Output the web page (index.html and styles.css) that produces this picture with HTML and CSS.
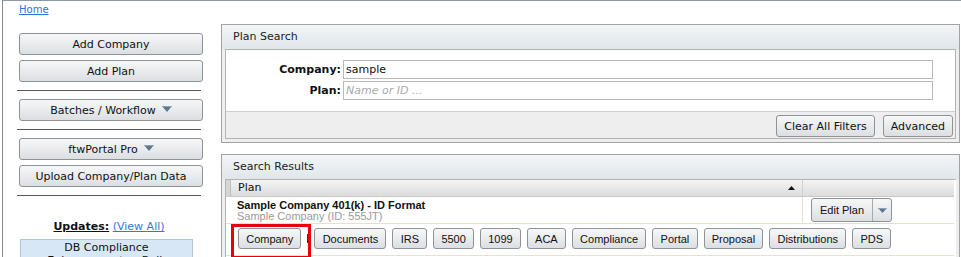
FILE: index.html
```html
<!DOCTYPE html>
<html>
<head>
<meta charset="utf-8">
<link rel="stylesheet" href="styles.css">
</head>
<body>
<div class="frame">
  <div class="crumb"><a href="#">Home</a></div>
  <div class="main">
    <aside class="side">
      <button class="sbtn">Add Company</button>
      <button class="sbtn">Add Plan</button>
      <hr class="div">
      <button class="sbtn">Batches / Workflow <svg class="tri" width="10" height="6" viewBox="0 0 10 6"><path d="M0 0H10L5 6Z" fill="#5d7690"/><path d="M0.5 0.5H9.5" stroke="#8da3b8" stroke-width="1"/></svg></button>
      <hr class="div">
      <button class="sbtn">ftwPortal Pro <svg class="tri" width="10" height="6" viewBox="0 0 10 6"><path d="M0 0H10L5 6Z" fill="#5d7690"/><path d="M0.5 0.5H9.5" stroke="#8da3b8" stroke-width="1"/></svg></button>
      <button class="sbtn">Upload Company/Plan Data</button>
      <hr class="div">
      <div class="updates"><span class="uph">Updates:</span> <a href="#">(View All)</a></div>
      <div class="upbox">DB Compliance<br>Enhancements – Bulk</div>
    </aside>
    <section class="content">
      <div class="panel">
        <div class="phead">Plan Search</div>
        <div class="pbody">
          <div class="form">
            <label class="lbl">Company:</label><input class="inp" type="text" value="sample">
            <label class="lbl">Plan:</label><input class="inp" type="text" placeholder="Name or ID ...">
          </div>
          <div class="foot">
            <button class="fbtn">Clear All Filters</button>
            <button class="fbtn">Advanced</button>
          </div>
        </div>
      </div>
      <div class="panel results">
        <div class="phead">Search Results</div>
        <div class="pbody grid">
          <div class="ghead">
            <div class="gcol1">Plan <svg class="sort" width="7" height="4" viewBox="0 0 7 4"><path d="M0 4L3.5 0L7 4Z" fill="#111"/></svg></div>
            <div class="gcol2"></div>
          </div>
          <div class="grow">
            <div class="gcol1 pl">
              <div class="ptitle">Sample Company 401(k) - ID Format</div>
              <div class="psub">Sample Company (ID: 555JT)</div>
            </div>
            <div class="gcol2 act">
              <div class="split"><span class="sl">Edit Plan</span><span class="sr"><svg width="9" height="5" viewBox="0 0 9 5"><path d="M0 0H9L4.5 5Z" fill="#5d7690"/><path d="M0.5 0.5H8.5" stroke="#8da3b8" stroke-width="1"/></svg></span></div>
            </div>
          </div>
          <div class="brow">
            <span class="hl"><button class="rbtn">Company</button><span class="caret"></span></span>
            <button class="rbtn">Documents</button>
            <button class="rbtn">IRS</button>
            <button class="rbtn">5500</button>
            <button class="rbtn">1099</button>
            <button class="rbtn">ACA</button>
            <button class="rbtn">Compliance</button>
            <button class="rbtn">Portal</button>
            <button class="rbtn">Proposal</button>
            <button class="rbtn">Distributions</button>
            <button class="rbtn">PDS</button>
          </div>
        </div>
      </div>
    </section>
  </div>
</div>
</body>
</html>
```

FILE: styles.css
```css
html, body {
  margin: 0;
  padding: 0;
  background: #fff;
  overflow: hidden;
  height: 257px;
}
.frame {
  margin-left: 2px;
  border-left: 1px solid #8a8a8a;
  border-top: 1px solid #8d99a5;
  height: 256px;
  overflow: hidden;
  font-family: "DejaVu Sans", Verdana, sans-serif;
  color: #111;
}
.crumb {
  height: 23px;
  padding-left: 16px;
  font-size: 10px;
  line-height: 12px;
  padding-top: 3px;
  box-sizing: border-box;
}
.crumb a { color: #2f6fde; }
.main {
  display: flex;
  align-items: flex-start;
}
.side {
  width: 218px;
  flex: none;
  box-sizing: border-box;
  padding: 9px 0 0 14px;
  display: flex;
  flex-direction: column;
  align-items: flex-start;
}
.sbtn {
  margin: 0 0 5px 2px;
  width: 184px;
  height: 22px;
  border: 1px solid #8e9398;
  border-radius: 3px;
  background: linear-gradient(#f6f7f8, #e9ebed 50%, #dcdfe2);
  font-family: "DejaVu Sans", Verdana, sans-serif;
  font-size: 11px;
  color: #111;
  padding: 0;
  display: flex;
  align-items: center;
  justify-content: center;
  gap: 6px;
}
.sbtn .tri { margin-top: -2px; }
.div {
  width: 184px;
  margin: 3px 0 8px 0;
  border: 0;
  border-top: 1px solid #5a5a5a;
  height: 0;
}
.updates {
  width: 184px;
  text-align: center;
  margin-top: 16px;
  font-size: 11px;
  line-height: 13px;
}
.uph { font-weight: bold; text-decoration: underline; }
.updates a { color: #3b74d6; }
.upbox {
  margin: 6px 0 0 3px;
  width: 173px;
  box-sizing: border-box;
  background: #d8e7f5;
  border: 1px solid #b3c5d6;
  text-align: center;
  font-size: 11px;
  line-height: 13px;
  padding-top: 1px;
  height: 40px;
}
.content {
  flex: 1;
  min-width: 0;
  margin-right: 1px;
}
.panel {
  border: 1px solid #a2a2a2;
  background: linear-gradient(#f2f5f6, #dfe7eb 24px, #eeeeee 24px);
}
.phead {
  height: 24px;
  line-height: 24px;
  padding-left: 11px;
  font-size: 11px;
  color: #222;
}
.pbody {
  margin: 0 3px 3px 3px;
  border: 1px solid #b4b4b4;
  background: #fff;
}
.form {
  display: grid;
  grid-template-columns: 115px 1fr;
  column-gap: 2px;
  row-gap: 2px;
  padding: 10px 22px 11px 0;
  align-items: center;
}
.lbl {
  text-align: right;
  font-weight: bold;
  font-size: 11px;
  color: #111;
}
.inp {
  height: 19px;
  box-sizing: border-box;
  border: 1px solid #b9b9b9;
  padding: 0 2px;
  font-family: "DejaVu Sans", Verdana, sans-serif;
  font-size: 11px;
  color: #111;
  outline: none;
}
.inp::placeholder { color: #aaa; font-style: italic; }
.foot {
  background: #eeeeee;
  border-top: 1px solid #cfcfcf;
  display: flex;
  justify-content: flex-end;
  gap: 8px;
  padding: 3px 2px 1px 0;
}
.fbtn {
  height: 22px;
  border: 1px solid #8e9398;
  border-radius: 3px;
  background: linear-gradient(#f6f7f8, #e9ebed 50%, #dcdfe2);
  font-family: "DejaVu Sans", Verdana, sans-serif;
  font-size: 11px;
  color: #111;
  padding: 0 7px;
}
.results { margin-top: 11px; }
.grid { border-right: 0; height: 80px; }
.ghead {
  display: flex;
  height: 16px;
  border-left: 4px solid #d6d6d6;
  border-bottom: 1px solid #c8c8c8;
  background: linear-gradient(#f4f4f4, #dcdcdc);
  margin-right: 2px;
  font-size: 11px;
  line-height: 16px;
}
.gcol1 {
  width: 573px;
  flex: none;
  box-sizing: border-box;
  border-right: 1px solid #cfcfcf;
  position: relative;
  padding-left: 7px;
}
.ghead .gcol1 { border-left: 1px solid #bdbdbd; }
.gcol2 { flex: 1; }
.sort { position: absolute; right: 7px; top: 6px; }
.grow {
  display: flex;
  border-bottom: 1px solid #e9dfcf;
  margin-right: 2px;
  height: 26px;
}
.grow .gcol1 { border-right: 1px solid #eadfce; width: 577px; padding-left: 11px; }
.pl { font-family: "Liberation Sans", Arial, sans-serif; font-size: 11px; padding-top: 2px; }
.ptitle { font-weight: bold; line-height: 12px; color: #111; }
.psub { color: #9a9a9a; line-height: 11px; }
.act { padding: 1px 0 0 8px; }
.split {
  display: inline-flex;
  height: 24px;
  box-sizing: border-box;
  border: 1px solid #8e9398;
  border-radius: 3px;
  background: linear-gradient(#f6f7f8, #e9ebed 50%, #dcdfe2);
  font-family: "Liberation Sans", Arial, sans-serif;
  font-size: 11px;
  align-items: stretch;
}
.sl { padding: 0 8px; display: flex; align-items: center; border-right: 1px solid #a6abb0; }
.sr { width: 18px; display: flex; align-items: center; justify-content: center; }
.brow {
  display: flex;
  padding: 4px 0 0 12px;
  gap: 6px;
  height: 32px;
  box-sizing: border-box;
  align-items: flex-start;
  border-bottom: 1px solid #e9dfcf;
  margin-right: 2px;
}
.rbtn {
  height: 21px;
  border: 1px solid #8e9398;
  border-radius: 3px;
  background: linear-gradient(#f6f7f8, #e9ebed 50%, #dcdfe2);
  font-family: "Liberation Sans", Arial, sans-serif;
  font-size: 11px;
  color: #111;
  padding: 0 7.2px;
}
.hl {
  position: relative;
  display: flex;
  margin-right: 7px;
}
.hl::after {
  content: "";
  position: absolute;
  left: -7px;
  top: -4px;
  width: 74px;
  height: 29px;
  border: 3px solid #e8000b;
}
.caret {
  position: absolute;
  left: 69px;
  top: 6px;
  width: 2px;
  height: 9px;
  background: #333;
}
```
